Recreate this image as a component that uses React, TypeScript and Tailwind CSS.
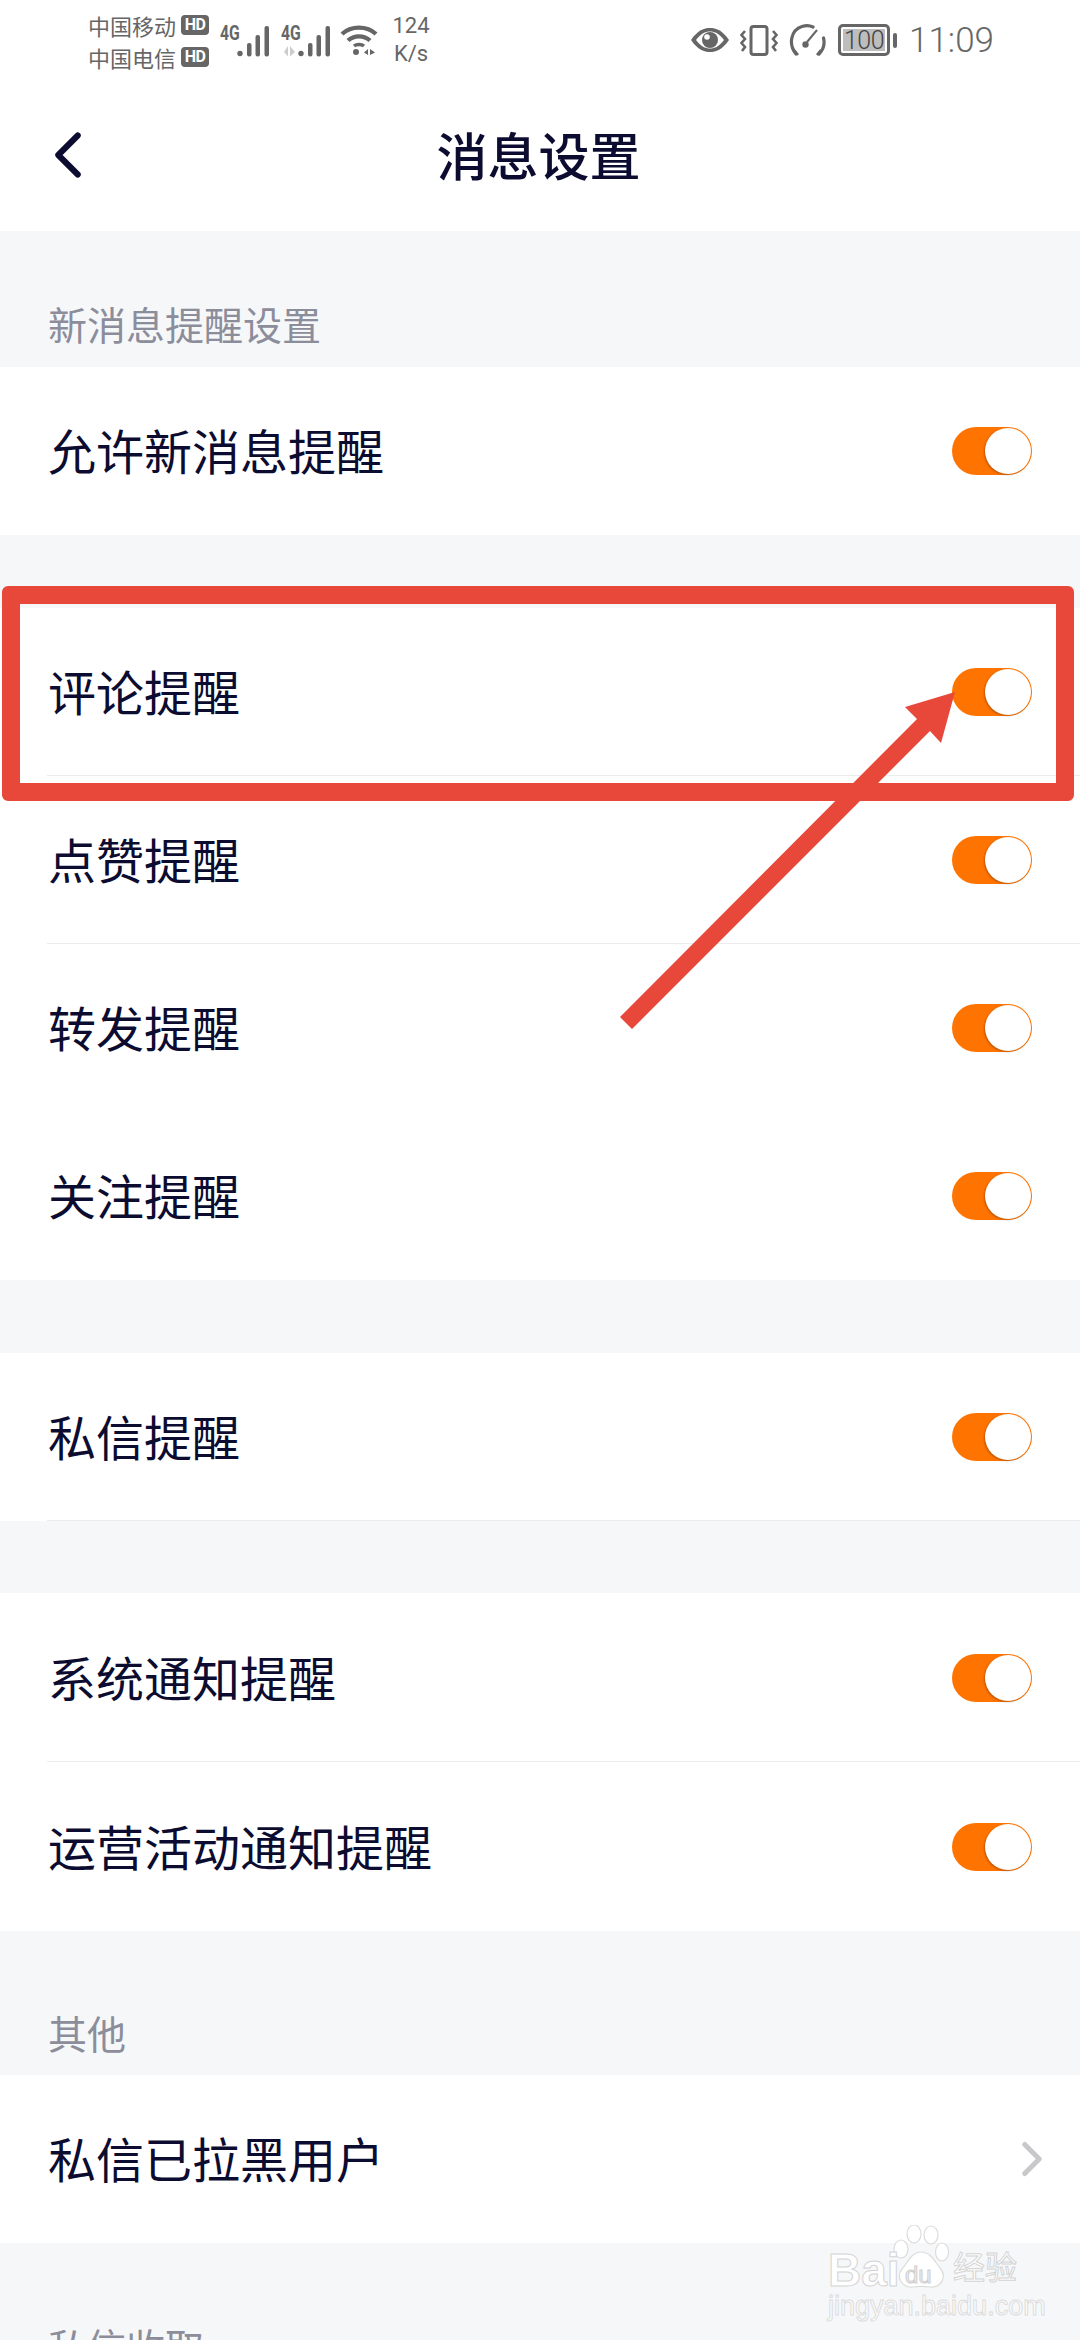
import React from 'react';
import { ChevronLeft, ChevronRight } from 'lucide-react';

const font = "font-['Noto_Sans_CJK_SC','Noto_Sans',sans-serif]";

const Signal = ({ arrows }: { arrows?: boolean }) => (
  <svg width="33" height="31" viewBox="0 0 33 31" fill="#666" className="mt-[1px] overflow-visible">
    <circle cx="3" cy="27.5" r="2.7" />
    <rect x="10" y="17" width="4.5" height="13.5" rx="2" />
    <rect x="18.5" y="9" width="4.5" height="21.5" rx="2" />
    <rect x="27.5" y="0" width="4.5" height="30.5" rx="2" />
    {arrows && <path d="M-10 20 L-10 30.5 L-14 26 Z M-8 20 L-8 30.5 L-3 26 Z" fill="#ccc" />}
  </svg>
);

const Wifi = () => (
  <svg width="38" height="32" viewBox="0 0 38 32" fill="none" stroke="#666">
    <path d="M2 10 C11 1.5 27 1.5 36 10" strokeWidth="4.4" />
    <path d="M8 16.5 C14 11 24 11 30 16.5" strokeWidth="4.4" />
    <path d="M14 22 C16.5 20 21.5 20 24 22" strokeWidth="3.5" />
    <circle cx="16" cy="28" r="3" fill="#666" stroke="none" />
    <path d="M28 25 L28 31 L24 28.5 Z M30 25 L30 31 L35 28.5 Z" fill="#666" stroke="none" />
  </svg>
);

const Eye = () => (
  <svg width="40" height="26" viewBox="0 0 40 26">
    <path d="M1 13 C8 3 14 1 20 1 C26 1 32 3 39 13 C32 23 26 25 20 25 C14 25 8 23 1 13 Z" fill="#666" />
    <path d="M6 13 C11 6.5 15 4.5 20 4.5 C25 4.5 29 6.5 34 13 C29 19.5 25 21.5 20 21.5 C15 21.5 11 19.5 6 13 Z" fill="#fff" />
    <circle cx="20" cy="13" r="8" fill="#666" />
    <circle cx="17" cy="10" r="2.8" fill="#fff" />
  </svg>
);

const Vibrate = () => (
  <svg width="38" height="31" viewBox="0 0 38 31" fill="none" stroke="#666">
    <rect x="11" y="1.5" width="16" height="28" rx="2.5" strokeWidth="3" />
    <path d="M5 6 L1.5 10 L5 14 L1.5 18 L5 22 L2 26" strokeWidth="2.6" />
    <path d="M33 6 L36.5 10 L33 14 L36.5 18 L33 22 L36 26" strokeWidth="2.6" />
  </svg>
);

const Gauge = () => (
  <svg width="37" height="32" viewBox="0 0 37 32" fill="none" stroke="#666">
    <path d="M7 30 C-1 20 2 6 13 2.5 C17 1.2 21 1.5 24 3" strokeWidth="3.2" strokeLinecap="round" />
    <path d="M30 30 C34 26 36 20 34.5 14" strokeWidth="3.2" strokeLinecap="round" />
    <path d="M28 6 L18 18" strokeWidth="2" />
    <circle cx="16.5" cy="20.5" r="3.2" fill="#666" stroke="none" />
    <path d="M5 26 L9 31 M32 26 L28 31" strokeWidth="2.6" />
  </svg>
);

const Battery = () => (
  <div className="flex items-center gap-[3px]">
    <div className="w-[52px] h-[32px] rounded-[5px] border-[3px] border-[#666] p-[2px]">
      <div className="h-full bg-[#bdbdbd] flex items-center justify-center font-['Roboto',sans-serif] font-light text-[25px] leading-none tracking-[-0.5px] text-[#444]">
        100
      </div>
    </div>
    <div className="w-[4px] h-[15px] rounded-full bg-[#666]" />
  </div>
);

const HdBadge = () => (
  <span className="w-[28px] h-[20px] rounded-[4px] bg-[#666] text-white font-['Roboto',sans-serif] font-bold text-[16px] leading-[20px] text-center tracking-[-0.5px]">
    HD
  </span>
);

const NetLabel = () => (
  <span className="font-['Roboto',sans-serif] font-bold text-[21px] leading-[16px] w-[17px] scale-x-75 origin-left">4G</span>
);

const StatusBar = () => (
  <div className="h-[80px] flex items-center text-[#666] pl-[88px]">
    <div className="flex flex-col gap-[10px] w-[121px] pt-[2px]">
      <div className="flex items-center gap-[5px] text-[22px] leading-[22px]">
        <span>中国移动</span>
        <HdBadge />
      </div>
      <div className="flex items-center gap-[5px] text-[22px] leading-[22px]">
        <span>中国电信</span>
        <HdBadge />
      </div>
    </div>
    <div className="flex items-start ml-[11px] mt-[1px]">
      <NetLabel />
      <Signal />
    </div>
    <div className="flex items-start ml-[11px] mt-[1px]">
      <NetLabel />
      <Signal arrows />
    </div>
    <div className="ml-[9px]">
      <Wifi />
    </div>
    <div className="ml-[14px] w-[38px] flex flex-col items-center font-['Roboto',sans-serif] text-[22px] leading-[28px]">
      <span>124</span>
      <span>K/s</span>
    </div>
    <div className="flex items-center ml-[260px]">
      <Eye />
      <div className="ml-[10px]"><Vibrate /></div>
      <div className="ml-[11px]"><Gauge /></div>
      <div className="ml-[12px]"><Battery /></div>
      <span className="ml-[12px] font-['Roboto',sans-serif] font-light text-[35px] leading-none">11:09</span>
    </div>
  </div>
);

const Toggle = () => (
  <div className="w-[80px] h-[48px] rounded-full bg-[#ff7300] flex items-center justify-end pr-px">
    <div className="w-[46px] h-[46px] rounded-full bg-white shadow-[-1px_1px_2px_rgba(0,0,0,0.25)]" />
  </div>
);

type RowProps = { label: string; divider?: boolean; arrow?: boolean; tall?: boolean };

const Row = ({ label, divider, arrow, tall }: RowProps) => (
  <div className={`${tall ? 'h-[169px]' : 'h-[168px]'} pl-[48px] pr-[48px] flex items-center justify-between relative bg-white`}>
    <span className="text-[48px] leading-none text-[#0c0c30] mb-[4px]">{label}</span>
    {arrow ? <ChevronRight size={58} strokeWidth={2.07} color="#c8c8cb" className="mr-[-29px]" /> : <Toggle />}
    {divider && <div className="absolute left-[47px] right-0 bottom-0 h-px bg-[#ececef]" />}
  </div>
);

const SectionLabel = ({ text, className }: { text: string; className: string }) => (
  <div className={`pl-[48px] text-[39px] leading-none text-[#8c8d9b] ${className}`}>{text}</div>
);

const Watermark = () => (
  <div className="absolute left-[828px] top-[2225px] w-[200px] h-[95px] text-white">
    <svg width="60" height="66" viewBox="0 0 60 66" className="absolute left-[65px] top-0" fill="#fff" stroke="#dcdcdc" strokeWidth="1.2">
      <ellipse cx="8" cy="24" rx="7" ry="9" />
      <ellipse cx="21" cy="9" rx="7" ry="9" />
      <ellipse cx="38" cy="10" rx="7" ry="9" />
      <ellipse cx="49" cy="27" rx="6.5" ry="9" />
      <path d="M28 27 C38 27 42 37 47 43 C54 51 49 63 37 62 C30 61 26 61 20 62 C8 63 3 51 9 44 C15 38 18 27 28 27 Z" />
    </svg>
    <div className="absolute left-0 top-[22px] text-[46px] leading-none font-bold font-['Liberation_Sans',sans-serif] [-webkit-text-stroke:1px_#d4d4d4]">
      Bai
    </div>
    <div className="absolute left-[77px] top-[38px] text-[24px] leading-none text-[#f0f0f0] font-['Liberation_Sans',sans-serif] [-webkit-text-stroke:1px_#cfcfcf]">
      du
    </div>
    <div className="absolute left-[125px] top-[24px] text-[32px] leading-none font-['Noto_Sans_CJK_SC',sans-serif] [-webkit-text-stroke:1px_#d4d4d4]">
      经验
    </div>
    <div className="absolute left-0 top-[68px] text-[27px] leading-none whitespace-nowrap font-['Liberation_Sans',sans-serif] [-webkit-text-stroke:1px_#dcdcdc]">
      jingyan.baidu.com
    </div>
  </div>
);

// hand-placed annotation over the list
const Annotation = () => (
  <>
    <div className="absolute left-[2px] top-[586px] w-[1072px] h-[215px] rounded-[6px] border-[18px] border-[#e8483a]" />
    <svg className="absolute left-0 top-0" width="1080" height="1100" viewBox="0 0 1080 1100">
      <polygon
        points="620,1017 917,719 905,707 955,692 941,743 930,731 632,1029"
        fill="#e8483a"
      />
    </svg>
  </>
);

export default function App() {
  return (
    <div className={`relative w-[1080px] h-[2340px] overflow-hidden bg-[#f6f7f9] ${font}`}>
      <div className="bg-white h-[231px]">
        <StatusBar />
        <div className="h-[151px] relative flex items-center justify-center">
          <ChevronLeft size={78} strokeWidth={1.85} color="#0c0c30" className="absolute left-[29px] top-[36px]" />
          <h1 className="text-[51px] leading-none font-medium text-[#0c0c30] mr-[3px] mb-[3px]">消息设置</h1>
        </div>
      </div>

      <SectionLabel text="新消息提醒设置" className="pt-[73px] pb-[24px]" />
      <Row label="允许新消息提醒" />

      <div className="mt-[73px]">
        <Row label="评论提醒" divider />
        <Row label="点赞提醒" divider />
        <Row label="转发提醒" />
        <Row label="关注提醒" />
      </div>

      <div className="mt-[73px]">
        <Row label="私信提醒" divider />
      </div>

      <div className="mt-[72px]">
        <Row label="系统通知提醒" divider tall />
        <Row label="运营活动通知提醒" tall />
      </div>

      <SectionLabel text="其他" className="pt-[82px] pb-[23px]" />
      <Row label="私信已拉黑用户" arrow />
      <SectionLabel text="私信收取" className="pt-[83px]" />

      <Annotation />
      <Watermark />
    </div>
  );
}
